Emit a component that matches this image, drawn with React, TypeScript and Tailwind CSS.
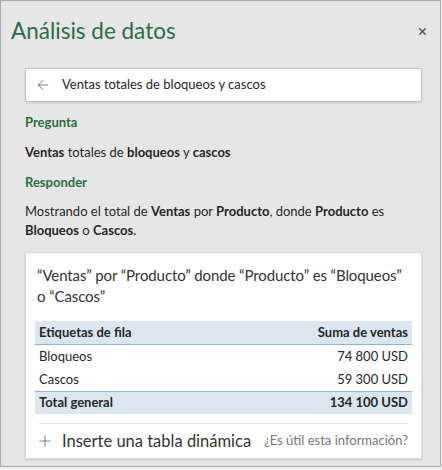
import { ArrowLeft, Plus, X } from "lucide-react";

const ROWS = [
  ["Bloqueos", "74 800 USD"],
  ["Cascos", "59 300 USD"],
] as const;

export default function App() {
  return (
    <div
      className="w-[442px] h-[470px] bg-[#f0f0f0] text-[#262626]"
      style={{ fontFamily: 'Lato, "Noto Sans", sans-serif' }}
    >
      <div className="h-[467px] w-[441px] border border-[#acacac] bg-[#e6e6e6] flex flex-col">
        {/* Header */}
        <div className="flex items-center justify-between pl-[10px] pr-[12px] pt-[13px]">
          <h1 className="text-[22.5px] leading-[34px] text-[#2a6d45]">Análisis de datos</h1>
          <X size={11} strokeWidth={3} className="text-[#555]" />
        </div>

        <div className="pl-[24px] pr-[18px] pt-[20px]">
          {/* Search box */}
          <div className="h-[34px] bg-white border border-[#c2c2c2] rounded-[2px] flex items-center shadow-[0_1px_2px_rgba(0,0,0,0.12)]">
            <ArrowLeft size={16} strokeWidth={1.2} className="ml-[9px] text-[#555]" />
            <span className="ml-[11px] text-[13px] text-[#262626]">Ventas totales de bloqueos y cascos</span>
          </div>

          <div className="mt-[10px] text-[13px] leading-[20px] font-bold text-[#2a6d45]">Pregunta</div>
          <div className="mt-[10px] text-[13px] leading-[20px]">
            <b className="font-bold">Ventas</b> totales de <b className="font-bold">bloqueos</b> y{" "}
            <b className="font-bold">cascos</b>
          </div>
          <div className="mt-[10px] text-[13px] leading-[20px] font-bold text-[#2a6d45]">Responder</div>
          <div className="mt-[10px] text-[13px] leading-[19px] pr-[6px]">
            Mostrando el total de <b className="font-bold">Ventas</b> por <b className="font-bold">Producto</b>,
            donde <b className="font-bold">Producto</b> es <b className="font-bold">Bloqueos</b> o{" "}
            <b className="font-bold">Cascos</b>.
          </div>

          {/* Result card */}
          <div className="mt-[12px] bg-white border border-[#d9d9d9] shadow-[0_1px_2px_rgba(0,0,0,0.15)] px-[9px] pt-[12px]">
            <div className="px-[2px] text-[15px] leading-[21px] tracking-[-0.1px] text-[#333]">
              “Ventas” por “Producto” donde “Producto” es “Bloqueos” o “Cascos”
            </div>

            <div className="mt-[14px] text-[13px]">
              <div className="h-[24px] bg-[#dce6f1] border-b border-[#95b3d7] flex items-center justify-between px-[4px] font-bold">
                <span>Etiquetas de fila</span>
                <span>Suma de ventas</span>
              </div>
              {ROWS.map(([label, value]) => (
                <div key={label} className="h-[23px] flex items-center justify-between px-[4px]">
                  <span>{label}</span>
                  <span>{value}</span>
                </div>
              ))}
              <div className="h-[23px] bg-[#dce6f1] border-t border-[#95b3d7] flex items-center justify-between px-[4px] font-bold">
                <span>Total general</span>
                <span>134 100 USD</span>
              </div>
            </div>

            <div className="mt-[9px] mx-[4px] border-t border-[#e3e3e3]" />

            <div className="h-[34px] flex items-center justify-between pl-[1px] pr-[4px] whitespace-nowrap">
              <div className="flex items-center gap-[8px] text-[16.5px] text-[#333]">
                <Plus size={18} strokeWidth={1} className="text-[#555]" />
                <span>Inserte una tabla dinámica</span>
              </div>
              <span className="text-[13px] text-[#767676]">¿Es útil esta información?</span>
            </div>
          </div>
        </div>
      </div>
    </div>
  );
}
